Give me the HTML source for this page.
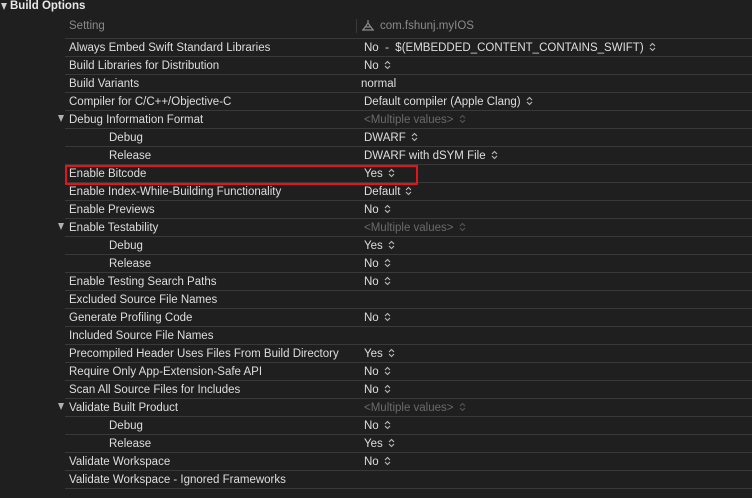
<!DOCTYPE html>
<html><head><meta charset="utf-8"><style>
html,body{margin:0;padding:0;width:752px;height:498px;overflow:hidden;background:#1f1f1f;font-family:"Liberation Sans",sans-serif;}
.t{position:absolute;font-size:11.5px;color:#dedede;white-space:pre;line-height:18px;}
.g{color:#6a6a6a}
.ln{position:absolute;left:65px;right:0;height:1px;background:#393939}
.tri{position:absolute;width:0;height:0;border-left:3.5px solid transparent;border-right:3.5px solid transparent;border-top:7px solid #b0b0b0}
.ud{display:inline-block;margin-left:5px;vertical-align:-1px}
</style></head><body>
<div class="tri" style="left:1px;top:3px;border-top-color:#cfcfcf"></div>
<div class="t" style="left:10px;top:-3px;font-weight:bold;color:#e8e8e8">Build Options</div>
<div class="t g" style="left:69px;top:17px;color:#8a8a8a">Setting</div>
<div style="position:absolute;left:356px;top:19px;width:1px;height:14px;background:#3a3a3a"></div>
<svg style="position:absolute;left:361px;top:19px" width="14" height="13" viewBox="0 0 14 13"><path d="M7 1V4M7 4L2 11M7 4L12 11M1 11H13M3.5 8H10.5" stroke="#8a8a8a" stroke-width="1.2" fill="none"/></svg>
<div class="t" style="left:380px;top:17px;color:#8a8a8a">com.fshunj.myIOS</div>
<div class="ln" style="top:38px"></div>
<div id="rows"></div>
<div style="position:absolute;left:65px;top:165px;width:353px;height:20px;border:2px solid #e3141a;box-sizing:border-box"></div>
<script>
var R=[
["Always Embed Swift Standard Libraries","No  -  $(EMBEDDED_CONTENT_CONTAINS_SWIFT)",1],
["Build Libraries for Distribution","No",1],
["Build Variants","normal",0,0,0,1],
["Compiler for C/C++/Objective-C","Default compiler (Apple Clang)",1],
["Debug Information Format","<Multiple values>",1,0,1],
["Debug","DWARF",1,1],
["Release","DWARF with dSYM File",1,1],
["Enable Bitcode","Yes",1],
["Enable Index-While-Building Functionality","Default",1],
["Enable Previews","No",1],
["Enable Testability","<Multiple values>",1,0,1],
["Debug","Yes",1,1],
["Release","No",1,1],
["Enable Testing Search Paths","No",1],
["Excluded Source File Names","",0],
["Generate Profiling Code","No",1],
["Included Source File Names","",0],
["Precompiled Header Uses Files From Build Directory","Yes",1],
["Require Only App-Extension-Safe API","No",1],
["Scan All Source Files for Includes","No",1],
["Validate Built Product","<Multiple values>",1,0,1],
["Debug","No",1,1],
["Release","Yes",1,1],
["Validate Workspace","No",1],
["Validate Workspace - Ignored Frameworks","",0]];
var h="";
R.forEach(function(r,i){var y=38+18*i;
if(r[4])h+='<div class="tri" style="left:58px;top:'+(y+5)+'px"></div>';
h+='<div class="t" style="left:'+(r[3]?109:69)+'px;top:'+(y+1)+'px">'+r[0]+'</div>';
if(r[1]){var v=r[1].replace(/</g,'&lt;').replace(/>/g,'&gt;');var c=r[4]?'#555':'#bbb';
h+='<div class="t'+(r[4]?' g':'')+'" style="left:'+(r[5]?361:364)+'px;top:'+(y+1)+'px">'+v+(r[2]?'<svg class="ud" width="7" height="10" viewBox="0 0 7 10"><path d="M1 4L3.5 1.5L6 4M1 6L3.5 8.5L6 6" stroke="'+c+'" stroke-width="1.1" fill="none"/></svg>':'')+'</div>';}
h+='<div class="ln" style="top:'+(y+18)+'px"></div>';});
document.getElementById('rows').innerHTML=h;
</script>
</body></html>
